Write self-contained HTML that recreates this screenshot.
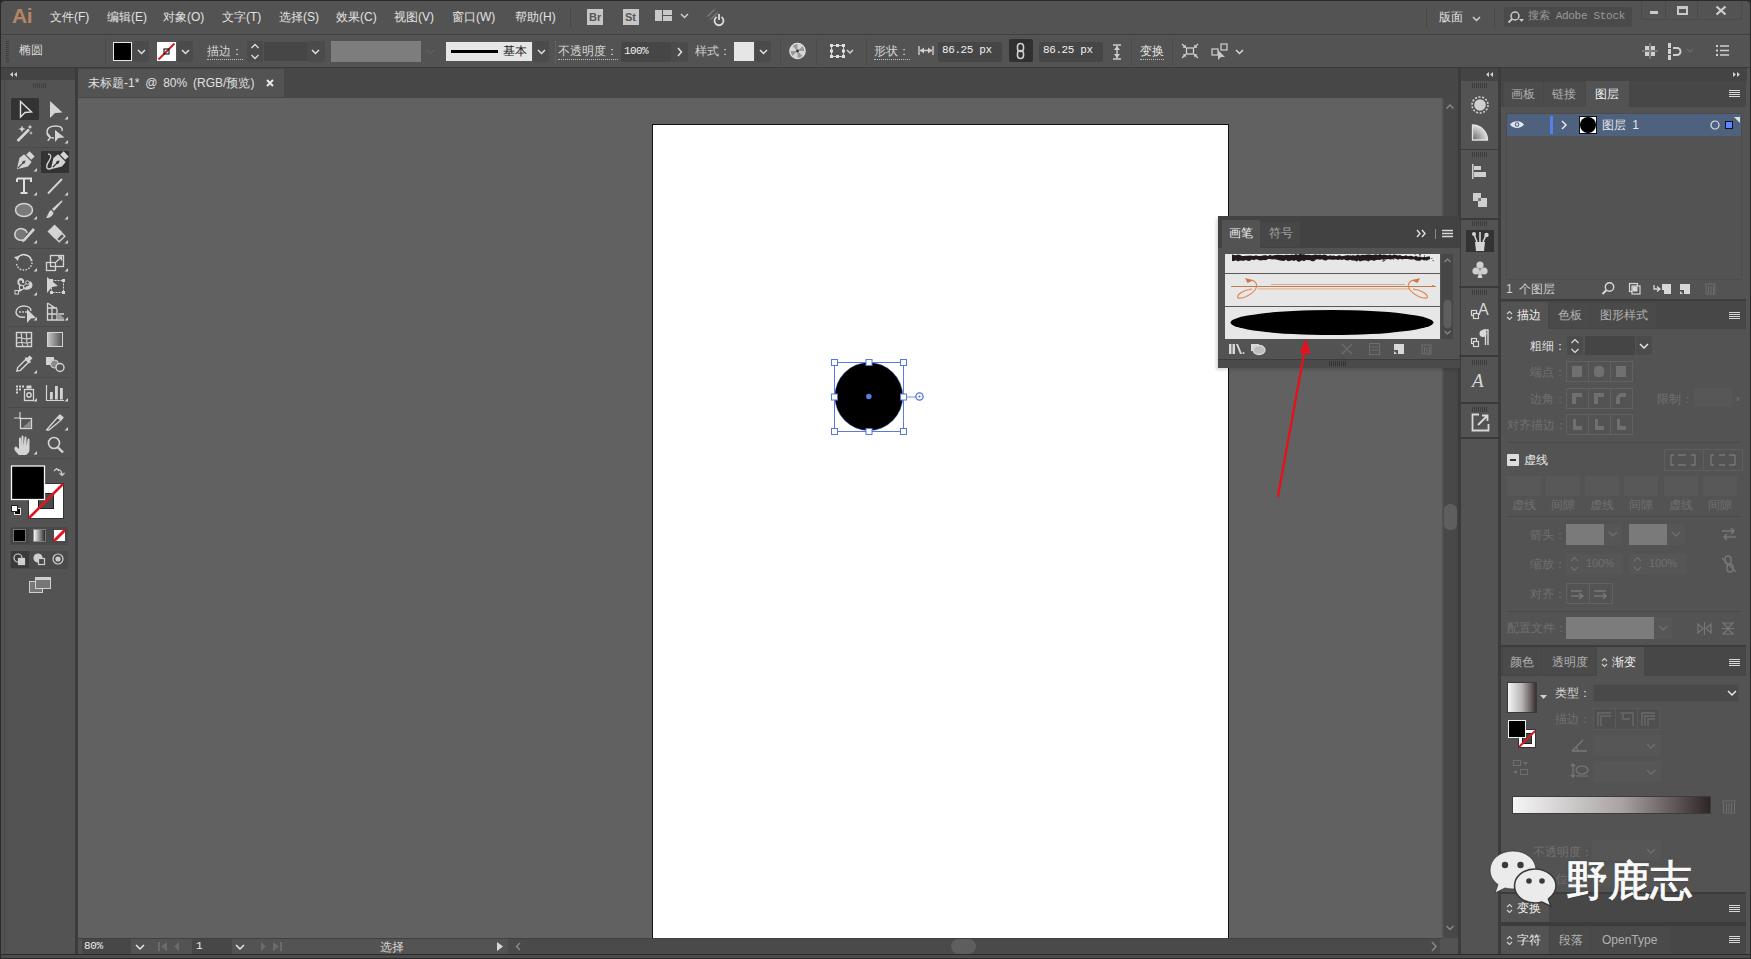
<!DOCTYPE html>
<html><head><meta charset="utf-8">
<style>
*{margin:0;padding:0;box-sizing:border-box}
html,body{width:1751px;height:959px;overflow:hidden;background:#2a2a2a}
body{position:relative;font-family:"Liberation Sans",sans-serif;font-size:12px;color:#d6d6d6}
.a{position:absolute}
.t{position:absolute;white-space:nowrap;line-height:1}
svg{position:absolute;overflow:visible}
.mi{top:11px;font-size:12px;color:#e2e2e2}
.ul{font-size:12px;color:#d6d6d6;padding-bottom:2px;border-bottom:1px dotted #bdbdbd}
.dim{font-size:12px;color:#707070}
.mono{font-family:"Liberation Mono",monospace;font-size:11px;color:#f0f0f0;letter-spacing:-0.4px}
</style></head><body>

<!-- ===== menu bar ===== -->
<div class="a" id="menubar" style="left:1px;top:1px;width:1749px;height:33px;background:#535353;border-radius:4px 4px 0 0"></div>
<div class="a" style="left:1px;top:34px;width:1749px;height:1px;background:#404040"></div>


<!-- menu content -->
<div class="t" style="left:12px;top:5px;font-size:21px;font-weight:bold;color:#b48666;letter-spacing:-0.5px">Ai</div>
<div class="t mi" style="left:50px">文件(F)</div>
<div class="t mi" style="left:107px">编辑(E)</div>
<div class="t mi" style="left:163px">对象(O)</div>
<div class="t mi" style="left:222px">文字(T)</div>
<div class="t mi" style="left:279px">选择(S)</div>
<div class="t mi" style="left:336px">效果(C)</div>
<div class="t mi" style="left:394px">视图(V)</div>
<div class="t mi" style="left:452px">窗口(W)</div>
<div class="t mi" style="left:515px">帮助(H)</div>
<div class="a" style="left:570px;top:8px;width:1px;height:20px;background:#484848"></div>
<div class="a" style="left:587px;top:9px;width:16px;height:16px;background:#c6c6c6"></div>
<div class="t" style="left:589px;top:12px;font-size:11px;font-weight:bold;color:#575757">Br</div>
<div class="a" style="left:623px;top:9px;width:16px;height:16px;background:#c6c6c6"></div>
<div class="t" style="left:625px;top:12px;font-size:11px;font-weight:bold;color:#575757">St</div>
<div class="a" style="left:655px;top:10px;width:7px;height:11px;background:#c8c8c8"></div>
<div class="a" style="left:663px;top:10px;width:9px;height:5px;background:#c8c8c8"></div>
<div class="a" style="left:663px;top:16px;width:9px;height:5px;background:#c8c8c8"></div>
<svg style="left:680px;top:13px" width="9" height="6"><path d="M1 1 L4.5 4.5 L8 1" fill="none" stroke="#d0d0d0" stroke-width="1.5"/></svg>
<svg style="left:704px;top:7px" width="24" height="20"><path d="M2 10 L9 3 L12 2 L5 9Z M5 13 L12 6 L15 5 L8 12Z M9 15 L14 10 L15 8 L11 13Z" fill="#7c7c7c"/><path d="M12.5 10 A4.5 4.5 0 1 0 17.5 10" fill="none" stroke="#dcdcdc" stroke-width="1.8"/><path d="M15 7 V13" stroke="#dcdcdc" stroke-width="1.8"/></svg>
<div class="a" style="left:1426px;top:8px;width:1px;height:20px;background:#484848"></div>
<div class="t mi" style="left:1439px">版面</div>
<svg style="left:1472px;top:16px" width="9" height="6"><path d="M1 1 L4.5 4.5 L8 1" fill="none" stroke="#d0d0d0" stroke-width="1.5"/></svg>
<div class="a" style="left:1494px;top:8px;width:1px;height:20px;background:#484848"></div>
<div class="a" style="left:1504px;top:7px;width:128px;height:20px;background:#4a4a4a;border-radius:2px"></div>
<svg style="left:1507px;top:10px" width="18" height="14"><circle cx="8" cy="6" r="4" fill="none" stroke="#c8c8c8" stroke-width="1.5"/><path d="M5 9 L1.5 12.5" stroke="#c8c8c8" stroke-width="1.8"/><path d="M12 9 H17 L14.5 12Z" fill="#c8c8c8"/></svg>
<div class="t" style="left:1528px;top:11px;font-size:11px;letter-spacing:-0.3px;color:#9a9a9a;font-family:'Liberation Mono',monospace">搜索 Adobe Stock</div>
<div class="a" style="left:1641px;top:1px;width:101px;height:19px;border:1px solid #4b4b4b;border-top:none;border-radius:0 0 3px 3px"></div>
<div class="a" style="left:1665px;top:1px;width:1px;height:18px;background:#4b4b4b"></div>
<div class="a" style="left:1697px;top:1px;width:1px;height:18px;background:#4b4b4b"></div>
<div class="a" style="left:1650px;top:11px;width:8px;height:3px;background:#c8c8c8"></div>
<div class="a" style="left:1677px;top:6px;width:11px;height:9px;border:2px solid #c8c8c8;border-top-width:3px"></div>
<svg style="left:1715px;top:5px" width="12" height="11"><path d="M1.5 1.5 L10.5 9.5 M10.5 1.5 L1.5 9.5" stroke="#d0d0d0" stroke-width="2.2"/></svg>

<!-- ===== control bar ===== -->
<div class="a" id="ctrl" style="left:1px;top:35px;width:1749px;height:32px;background:#535353"></div>
<div class="a" style="left:1px;top:67px;width:1749px;height:1px;background:#3a3a3a"></div>


<!-- control content -->
<div class="a" style="left:6px;top:41px;width:3px;height:22px;background:repeating-linear-gradient(#3e3e3e 0 1px,transparent 1px 2px)"></div>
<div class="t" style="left:19px;top:44px;font-size:12px;color:#d8d8d8">椭圆</div>
<div class="a" style="left:105px;top:39px;width:1px;height:26px;background:#4a4a4a"></div>
<div class="a" style="left:113px;top:42px;width:19px;height:19px;background:#000;border:1px solid #e8e8e8"></div>
<div class="a" style="left:133px;top:41px;width:16px;height:21px;background:#4b4b4b;border-radius:2px"></div>
<svg style="left:137px;top:49px" width="9" height="6"><path d="M1 1 L4.5 4.5 L8 1" fill="none" stroke="#e0e0e0" stroke-width="1.5"/></svg>
<div class="a" style="left:157px;top:42px;width:19px;height:19px;background:#fff"></div>
<svg style="left:157px;top:42px" width="19" height="19"><path d="M1.5 17.5 L17.5 1.5" stroke="#d71a21" stroke-width="2"/><rect x="7" y="7" width="5" height="5" fill="none" stroke="#222" stroke-width="1.2"/></svg>
<div class="a" style="left:177px;top:41px;width:16px;height:21px;background:#4b4b4b;border-radius:2px"></div>
<svg style="left:181px;top:49px" width="9" height="6"><path d="M1 1 L4.5 4.5 L8 1" fill="none" stroke="#e0e0e0" stroke-width="1.5"/></svg>
<div class="t ul" style="left:207px;top:45px">描边：</div>
<div class="a" style="left:247px;top:41px;width:16px;height:21px;background:#4b4b4b;border-radius:2px"></div>
<svg style="left:250px;top:43px" width="10" height="17"><path d="M1.5 5 L5 1.5 L8.5 5 M1.5 12 L5 15.5 L8.5 12" fill="none" stroke="#e0e0e0" stroke-width="1.3"/></svg>
<div class="a" style="left:264px;top:42px;width:43px;height:19px;background:#464646"></div>
<div class="a" style="left:307px;top:41px;width:18px;height:21px;background:#4b4b4b;border-radius:2px"></div>
<svg style="left:311px;top:49px" width="9" height="6"><path d="M1 1 L4.5 4.5 L8 1" fill="none" stroke="#e0e0e0" stroke-width="1.5"/></svg>
<div class="a" style="left:331px;top:41px;width:90px;height:21px;background:#7d7d7d"></div>
<svg style="left:426px;top:49px" width="9" height="6"><path d="M1 1 L4.5 4.5 L8 1" fill="none" stroke="#5e5e5e" stroke-width="1.5"/></svg>
<div class="a" style="left:446px;top:42px;width:86px;height:19px;background:#e6e6e6"></div>
<div class="a" style="left:451px;top:50px;width:47px;height:3px;background:#000"></div>
<div class="t" style="left:503px;top:45px;font-size:12px;color:#222">基本</div>
<div class="a" style="left:533px;top:41px;width:16px;height:21px;background:#4b4b4b;border-radius:2px"></div>
<svg style="left:537px;top:49px" width="9" height="6"><path d="M1 1 L4.5 4.5 L8 1" fill="none" stroke="#e0e0e0" stroke-width="1.5"/></svg>
<div class="a" style="left:555px;top:41px;width:1px;height:22px;border-left:1px dotted #6a6a6a"></div>
<div class="t ul" style="left:558px;top:45px">不透明度：</div>
<div class="a" style="left:621px;top:42px;width:50px;height:20px;background:#464646;border-radius:2px"></div>
<div class="t" style="left:624px;top:46px;font-size:11px;color:#f0f0f0;font-family:'Liberation Mono',monospace;letter-spacing:-0.6px">100%</div>
<div class="a" style="left:671px;top:42px;width:17px;height:20px;background:#4b4b4b;border-radius:2px"></div>
<svg style="left:677px;top:47px" width="6" height="10"><path d="M1 1 L4.5 5 L1 9" fill="none" stroke="#e0e0e0" stroke-width="1.5"/></svg>
<div class="t" style="left:695px;top:45px;font-size:12px;color:#d0d0d0">样式：</div>
<div class="a" style="left:734px;top:42px;width:20px;height:19px;background:#e6e6e6"></div>
<div class="a" style="left:755px;top:41px;width:16px;height:21px;background:#4b4b4b;border-radius:2px"></div>
<svg style="left:759px;top:49px" width="9" height="6"><path d="M1 1 L4.5 4.5 L8 1" fill="none" stroke="#e0e0e0" stroke-width="1.5"/></svg>
<div class="a" style="left:780px;top:39px;width:1px;height:26px;background:#4a4a4a"></div>
<svg style="left:789px;top:43px" width="18" height="17"><circle cx="8.5" cy="8" r="7.6" fill="#9a9a9a" stroke="#e4e4e4" stroke-width="1.4"/><g fill="#d6d6d6"><path d="M8.5 8 L8.5 0.5 A7.5 7.5 0 0 1 13.8 2.7Z"/><path d="M8.5 8 L16 8 A7.5 7.5 0 0 1 13.8 13.3Z"/><path d="M8.5 8 L8.5 15.5 A7.5 7.5 0 0 1 3.2 13.3Z"/><path d="M8.5 8 L1 8 A7.5 7.5 0 0 1 3.2 2.7Z"/></g><circle cx="8.5" cy="8" r="1.4" fill="#333"/></svg>
<div class="a" style="left:816px;top:39px;width:1px;height:26px;background:#4a4a4a"></div>
<svg style="left:829px;top:43px" width="28" height="17"><rect x="2.5" y="2.5" width="12" height="11" fill="none" stroke="#d0d0d0" stroke-width="1"/><g fill="#e0e0e0"><rect x="1" y="1" width="3" height="3"/><rect x="7" y="1" width="3" height="3"/><rect x="13" y="1" width="3" height="3"/><rect x="1" y="6.5" width="3" height="3"/><rect x="13" y="6.5" width="3" height="3"/><rect x="1" y="12" width="3" height="3"/><rect x="7" y="12" width="3" height="3"/><rect x="13" y="12" width="3" height="3"/></g><path d="M18 7 L21 10 L24 7" fill="none" stroke="#d8d8d8" stroke-width="1.4"/></svg>
<div class="a" style="left:866px;top:39px;width:1px;height:26px;background:#4a4a4a"></div>
<div class="t ul" style="left:874px;top:45px">形状：</div>
<svg style="left:918px;top:46px" width="16" height="10"><path d="M1 0 V9 M15 0 V9 M2 4.5 H14" stroke="#cfcfcf" stroke-width="1.4"/><path d="M2 4.5 L6 1.5 V7.5Z M14 4.5 L10 1.5 V7.5Z" fill="#cfcfcf"/></svg>
<div class="a" style="left:938px;top:42px;width:64px;height:20px;background:#464646;border-radius:2px"></div>
<div class="t mono" style="left:942px;top:45px">86.25 px</div>
<div class="a" style="left:1009px;top:39px;width:24px;height:23px;background:#303030;border-radius:2px"></div>
<svg style="left:1015px;top:42px" width="12" height="18"><rect x="2.5" y="1.5" width="6" height="8" rx="3" fill="none" stroke="#cfcfcf" stroke-width="1.6"/><rect x="2.5" y="8.5" width="6" height="8" rx="3" fill="none" stroke="#cfcfcf" stroke-width="1.6"/></svg>
<div class="a" style="left:1039px;top:42px;width:64px;height:20px;background:#464646;border-radius:2px"></div>
<div class="t mono" style="left:1043px;top:45px">86.25 px</div>
<svg style="left:1112px;top:44px" width="10" height="16"><path d="M1 1 H9 M1 15 H9 M5 2 V14" stroke="#cfcfcf" stroke-width="1.4"/><path d="M5 2 L2 6 H8Z M5 14 L2 10 H8Z" fill="#cfcfcf"/></svg>
<div class="a" style="left:1131px;top:39px;width:1px;height:26px;background:#4a4a4a"></div>
<div class="t ul" style="left:1140px;top:45px;color:#e6e6e6">变换</div>
<div class="a" style="left:1172px;top:39px;width:1px;height:26px;background:#4a4a4a"></div>
<svg style="left:1181px;top:43px" width="18" height="16"><rect x="5.5" y="5" width="7" height="6" fill="none" stroke="#d0d0d0" stroke-width="1.3"/><g stroke="#d0d0d0" stroke-width="1.2"><path d="M1 1 L4.5 4.5 M17 1 L13.5 4.5 M1 15 L4.5 11.5 M17 15 L13.5 11.5"/></g><g fill="#d0d0d0"><path d="M5 5 L1.5 4.5 L4.5 1.5Z M13 5 L16.5 4.5 L13.5 1.5Z M5 11 L1.5 11.5 L4.5 14.5Z M13 11 L16.5 11.5 L13.5 14.5Z"/></g></svg>
<svg style="left:1211px;top:43px" width="36" height="18"><rect x="1" y="6" width="6" height="6" fill="none" stroke="#c8c8c8" stroke-width="1.3"/><rect x="10" y="1" width="6" height="6" fill="none" stroke="#c8c8c8" stroke-width="1.3"/><path d="M7 7 L7 17 L10 14 L14 14Z" fill="#c8c8c8"/><path d="M25 7 L28.5 10.5 L32 7" fill="none" stroke="#d8d8d8" stroke-width="1.5"/></svg>
<svg style="left:1642px;top:43px" width="16" height="16"><g fill="#cfcfcf"><rect x="3" y="3" width="4" height="4"/><rect x="9" y="3" width="4" height="4"/><rect x="3" y="9" width="4" height="4"/><rect x="9" y="9" width="4" height="4"/></g><path d="M8 0 V16 M0 8 H16" stroke="#9a9a9a" stroke-width="1"/></svg>
<svg style="left:1667px;top:43px" width="30" height="17"><g fill="#d0d0d0"><rect x="1" y="0" width="3" height="5"/><rect x="1" y="6" width="3" height="5"/><rect x="1" y="12" width="3" height="5"/></g><path d="M6 5 H10 A3.5 3.5 0 0 1 10 12 H6" fill="none" stroke="#d0d0d0" stroke-width="2"/><path d="M20 6 L23 9 L26 6" fill="none" stroke="#6a6a6a" stroke-width="1.3"/></svg>
<svg style="left:1716px;top:45px" width="14" height="12"><g fill="#d0d0d0"><rect x="0" y="0" width="2" height="2"/><rect x="0" y="4.5" width="2" height="2"/><rect x="0" y="9" width="2" height="2"/></g><path d="M4 1 H13 M4 5.5 H13 M4 10 H13" stroke="#d0d0d0" stroke-width="1.5"/></svg>

<!-- ===== left toolbar ===== -->
<div class="a" id="tools" style="left:1px;top:68px;width:74px;height:886px;background:#535353"></div>
<div class="a" style="left:1px;top:68px;width:74px;height:12px;background:#444"></div>
<div class="a" style="left:75px;top:68px;width:3px;height:891px;background:#3c3c3c"></div>
<div class="a" style="left:4px;top:80px;width:1px;height:874px;background:#474747"></div>


<!-- tools content -->
<svg style="left:0;top:0" width="78" height="600">
<g fill="#3f3f3f"><rect x="33" y="83" width="1" height="5"/><rect x="35" y="83" width="1" height="5"/><rect x="37" y="83" width="1" height="5"/><rect x="39" y="83" width="1" height="5"/><rect x="41" y="83" width="1" height="5"/><rect x="43" y="83" width="1" height="5"/><rect x="45" y="83" width="1" height="5"/></g>
<path d="M10 72 L13 74.5 L10 77Z M14 72 L17 74.5 L14 77Z" fill="#cfcfcf" transform="translate(27 0) scale(-1 1)"/>
<g fill="#4a4a4a"><rect x="8" y="147" width="62" height="1"/><rect x="8" y="248" width="62" height="1"/><rect x="8" y="326" width="62" height="1"/><rect x="8" y="377" width="62" height="1"/><rect x="8" y="407" width="62" height="1"/><rect x="8" y="458" width="62" height="1"/></g>
<rect x="11" y="98" width="28" height="22" fill="#333" rx="1"/>
<rect x="41" y="151" width="28" height="22" fill="#333" rx="1"/>
<g fill="#d4d4d4">
<path d="M68 116 V119.5 H64.5Z M68 140 V143.5 H64.5Z"/>
<path d="M37 168 V171.5 H33.5Z M37 192 V195.5 H33.5Z M68 192 V195.5 H64.5Z M37 216 V219.5 H33.5Z M68 216 V219.5 H64.5Z M37 240 V243.5 H33.5Z M68 240 V243.5 H64.5Z"/>
<path d="M37 268 V271.5 H33.5Z M68 268 V271.5 H64.5Z M37 292 V295.5 H33.5Z M37 317 V320.5 H33.5Z M68 317 V320.5 H64.5Z"/>
<path d="M37 370 V373.5 H33.5Z M37 398 V401.5 H33.5Z M68 398 V401.5 H64.5Z M68 427 V430.5 H64.5Z M37 451 V454.5 H33.5Z"/>
</g>
<!-- selection -->
<path d="M20.5 101.5 L31.5 112 L25 112.5 L20.5 117Z" fill="none" stroke="#e0e0e0" stroke-width="1.4" stroke-linejoin="miter"/>
<path d="M50 101 L62.5 112.5 L55 113 L50 118Z" fill="#d4d4d4"/>
<!-- magic wand -->
<path d="M17.5 141 L29 129.5" stroke="#d4d4d4" stroke-width="2.6"/>
<path d="M22 125.5 L23 128 L25.5 129 L23 130 L22 132.5 L21 130 L18.5 129 L21 128Z M30 124.5 L30.7 126.3 L32.5 127 L30.7 127.7 L30 129.5 L29.3 127.7 L27.5 127 L29.3 126.3Z M31 131 L31.6 132.4 L33 133 L31.6 133.6 L31 135 L30.4 133.6 L29 133 L30.4 132.4Z" fill="#d4d4d4"/>
<!-- lasso -->
<path d="M54 138 C49 138 47 135 47 132 C47 128 51 126 56 126 C61 126 63 128 62 131 M47 132 C47 135 50 135 50 137 C50 139 48 140 48 141" fill="none" stroke="#d4d4d4" stroke-width="1.5"/>
<path d="M55 130 L64.5 137.5 L58.5 138 L55 142Z" fill="#d4d4d4"/>
<!-- pen -->
<g transform="translate(24.5 161.5) rotate(45) scale(1.2)"><path d="M-3 -9 H3 V-5 H-3Z" fill="#d4d4d4"/><path d="M-4.5 -4 H4.5 L5 1 L0 9 L-5 1Z" fill="#d4d4d4"/><path d="M0 -1 V8" stroke="#535353" stroke-width="1"/><circle cx="0" cy="1" r="1.2" fill="#535353"/></g>
<!-- curvature pen -->
<g transform="translate(58.5 161.5) rotate(45) scale(1.2)"><path d="M-3 -9 H3 V-5 H-3Z" fill="#d4d4d4"/><path d="M-4.5 -4 H4.5 L5 1 L0 9 L-5 1Z" fill="#d4d4d4"/><path d="M0 -1 V8" stroke="#333" stroke-width="1"/><circle cx="0" cy="1" r="1.2" fill="#333"/></g>
<path d="M48 154 C51 154 52 157 49 161 C46 165 46 169 49 169 C51 169 52 168 53 167" fill="none" stroke="#d4d4d4" stroke-width="1.3"/>
<!-- type -->
<path d="M17 178.5 H31 V182 M17 178.5 V182 M24 178.5 V193 M20.5 193 H27.5" fill="none" stroke="#e0e0e0" stroke-width="2"/>
<!-- line -->
<path d="M48 193.5 L62 179" stroke="#d4d4d4" stroke-width="1.8"/>
<!-- ellipse -->
<ellipse cx="24" cy="210" rx="8.5" ry="6.5" fill="#7a7a7a" stroke="#d4d4d4" stroke-width="1.5"/>
<!-- paintbrush -->
<path d="M61 201 C62 200 63 201 62 202 L54 211 L52 209Z" fill="#d4d4d4"/>
<path d="M51 210 L53.5 212.5 C53 216 50 218 46 218 C48 216 48 212 51 210Z" fill="#d4d4d4"/>
<!-- shaper -->
<path d="M23 240 C17 241 14 237 15 233 C16 229 20 228 23 229 C26 230 27 232 27 233" fill="#777" stroke="#d4d4d4" stroke-width="1.5"/>
<path d="M33 228 L35 230 L25 241 L22 242.5 L23 239.5Z" fill="#d4d4d4"/>
<!-- eraser -->
<g transform="translate(56 233) rotate(-45)"><rect x="-5" y="-7" width="10" height="11" fill="#d4d4d4"/><rect x="-4" y="4.5" width="8" height="4" fill="none" stroke="#d4d4d4" stroke-width="1.4"/></g>
<!-- rotate -->
<path d="M17 259 C19 255 23 254 26 255 C31 256 33 261 31.5 265 C30 269 25 271 21 269.5 C18.5 268.5 17 266.5 16.5 264" fill="none" stroke="#d4d4d4" stroke-width="1.4" stroke-dasharray="1.6 1.4"/>
<path d="M17 259 C19 255 23 254 26 255 C29 256 31 258 31.5 261" fill="none" stroke="#d4d4d4" stroke-width="1.6"/>
<path d="M14 257 L19 256 L18 261Z" fill="#d4d4d4"/>
<!-- scale -->
<rect x="50.5" y="255.5" width="13" height="11" fill="none" stroke="#d4d4d4" stroke-width="1.3"/>
<rect x="46.5" y="262.5" width="9" height="8" fill="none" stroke="#d4d4d4" stroke-width="1.3"/>
<path d="M56 262 L61.5 257 M58 257 H61.5 V260.5" fill="none" stroke="#d4d4d4" stroke-width="1.4"/>
<!-- puppet warp -->
<path d="M19 280 C17 282 19 285 21 286 C23 287 22 290 19 291 M19 280 C21 278 24 280 23 283 M21 286 C24 289 28 290 31 287 C32 285 31 283 30 282 C31 285 29 288 26 287" fill="none" stroke="#d4d4d4" stroke-width="2"/>
<path d="M17 292 L22 287 L27 283" fill="none" stroke="#d4d4d4" stroke-width="1"/>
<rect x="15" y="290.5" width="3.5" height="3.5" fill="#535353" stroke="#d4d4d4" stroke-width="1"/>
<circle cx="21.5" cy="287.5" r="2.2" fill="#535353" stroke="#d4d4d4" stroke-width="1.1"/>
<circle cx="27.5" cy="282.5" r="1.8" fill="#535353" stroke="#d4d4d4" stroke-width="1"/>
<!-- free transform -->
<rect x="51.5" y="280.5" width="12" height="12" fill="none" stroke="#d4d4d4" stroke-width="1" stroke-dasharray="2 1"/>
<g fill="#d4d4d4"><rect x="50" y="279" width="3" height="3"/><rect x="62" y="279" width="3" height="3"/><rect x="50" y="291" width="3" height="3"/><rect x="62" y="291" width="3" height="3"/></g>
<path d="M47 277 L58 286 L52 287 L47 293Z" fill="#d4d4d4"/>
<!-- shape builder -->
<path d="M25 317 C20 318 16 316 16 312 C16 308 20 306 24 306 C28 306 31 308 31 311" fill="none" stroke="#d4d4d4" stroke-width="1.4"/>
<g fill="#d4d4d4"><circle cx="20" cy="312" r="0.9"/><circle cx="23" cy="312" r="0.9"/><circle cx="26" cy="312" r="0.9"/></g>
<path d="M27 309 L36 318 L31 318.5 L27 323Z" fill="#d4d4d4"/>
<!-- perspective grid -->
<path d="M47.5 303 V320 H64 M47.5 303 L57 309 V320 M47.5 308 H57 M47.5 314 H64 M52 305.5 V320" fill="none" stroke="#d4d4d4" stroke-width="1.3"/>
<path d="M57 312 L64 318 V319 H57Z" fill="#9a9a9a"/>
<!-- mesh -->
<rect x="16.5" y="332.5" width="15" height="14" fill="none" stroke="#d4d4d4" stroke-width="1.4"/>
<path d="M17 338 C21 336 25 341 31 338 M17 343 C22 341 26 345 31 342 M21 333 C23 337 20 341 23 346 M26 333 C28 337 25 341 28 346" fill="none" stroke="#d4d4d4" stroke-width="1.1"/>
<!-- gradient -->
<defs><linearGradient id="tg" x1="0" x2="1"><stop offset="0" stop-color="#c8c8c8"/><stop offset="1" stop-color="#505050"/></linearGradient></defs>
<rect x="47.5" y="332.5" width="15" height="14" fill="url(#tg)" stroke="#d4d4d4" stroke-width="1"/>
<!-- eyedropper -->
<g transform="translate(24 364) rotate(45)"><rect x="-2" y="-10" width="4" height="4" fill="#d4d4d4"/><rect x="-3.5" y="-6.5" width="7" height="2" fill="#d4d4d4"/><path d="M-2 -4.5 H2 V7 L0 10 L-2 7Z" fill="none" stroke="#d4d4d4" stroke-width="1.4"/></g>
<!-- blend -->
<rect x="46" y="357" width="8" height="8" fill="#d4d4d4"/>
<circle cx="54.5" cy="364" r="4" fill="#8a8a8a" stroke="#d4d4d4" stroke-width="1"/>
<circle cx="60" cy="367.5" r="4" fill="#535353" stroke="#d4d4d4" stroke-width="1.4"/>
<!-- symbol sprayer -->
<g fill="#d4d4d4"><rect x="16" y="385.5" width="2" height="2"/><rect x="19" y="385.5" width="2" height="2"/><rect x="22" y="385.5" width="2" height="2"/><rect x="16" y="388.5" width="2" height="2"/><rect x="19" y="388.5" width="2" height="2"/><rect x="16" y="391.5" width="2" height="2"/></g>
<rect x="24.5" y="389.5" width="9" height="11" fill="none" stroke="#d4d4d4" stroke-width="1.3"/>
<rect x="26.5" y="385.5" width="5" height="3" fill="#d4d4d4"/>
<circle cx="29" cy="395" r="2.2" fill="none" stroke="#d4d4d4" stroke-width="1.4"/>
<!-- column graph -->
<path d="M46.5 385 V400.5 H64" fill="none" stroke="#d4d4d4" stroke-width="1.2"/>
<g fill="#d4d4d4"><rect x="50" y="392" width="2.8" height="7.5"/><rect x="55" y="386" width="2.8" height="13.5"/><rect x="60" y="388" width="2.8" height="11.5"/></g>
<!-- artboard -->
<path d="M14 418 H21 M20 412 V419" stroke="#d4d4d4" stroke-width="1.2"/>
<rect x="20.5" y="418.5" width="11" height="10" fill="none" stroke="#d4d4d4" stroke-width="1.3"/>
<path d="M22 428 L31 420 V428Z" fill="#8a8a8a"/>
<!-- slice -->
<path d="M46.5 430 L57 418 L60 415 L63 417.5 L60.5 420.5 L49 430Z" fill="none" stroke="#d4d4d4" stroke-width="1.3" stroke-linejoin="round"/>
<path d="M57 418 L60 415 L63 417.5 L60.5 420.5Z" fill="#d4d4d4"/>
<!-- hand -->
<path d="M19 455 C16 452 13 449 15 447 C16 446 17 447 19 449 L19 439 C19 437 21 437 21 439 V446 L21.5 437 C21.5 435 23.5 435 23.5 437 V446 L24.5 438 C24.5 436 26.5 436 26.5 438 V446 L27.5 440 C27.5 438 29.5 438 29.5 440 V449 C29.5 453 27 455 24 455Z" fill="#d4d4d4"/>
<!-- zoom -->
<circle cx="54" cy="443" r="5.5" fill="none" stroke="#d4d4d4" stroke-width="1.6"/>
<path d="M58 447.5 L63 452.5" stroke="#d4d4d4" stroke-width="2.4"/>
<!-- fill/stroke -->
<rect x="28.5" y="483.5" width="35" height="35" fill="#fff" stroke="#333" stroke-width="1"/>
<rect x="38.5" y="493.5" width="15" height="15" fill="#4a4a4a" stroke="#222" stroke-width="1"/>
<path d="M29 518 L63 484" stroke="#d71a21" stroke-width="2.6"/>
<rect x="11.5" y="466" width="33" height="33.5" fill="#000" stroke="#f6f6f6" stroke-width="1.3"/>
<path d="M56 469 C60 469 62 471 62 475 M54 471 L56.5 468.5 L59 471 M59.5 473 L62 475.5 L64.5 473" fill="none" stroke="#cfcfcf" stroke-width="1.2"/>
<rect x="14.5" y="508.5" width="6" height="6" fill="#000" stroke="#e6e6e6" stroke-width="1"/>
<rect x="11.5" y="505.5" width="6" height="6" fill="#fff" stroke="#222" stroke-width="1"/>
<!-- color modes -->
<rect x="10" y="527" width="58" height="18" fill="#4a4a4a" rx="1"/>
<rect x="11" y="528" width="18" height="16" fill="#444"/>
<rect x="13.5" y="529.5" width="12" height="12" fill="#000" stroke="#888" stroke-width="0.8"/>
<defs><linearGradient id="tg2" x1="0" x2="1"><stop offset="0" stop-color="#fff"/><stop offset="1" stop-color="#222"/></linearGradient></defs>
<rect x="33.5" y="529.5" width="12" height="12" fill="url(#tg2)" stroke="#888" stroke-width="0.8"/>
<rect x="53.5" y="529.5" width="12" height="12" fill="#fff" stroke="#333" stroke-width="0.8"/>
<path d="M54 541 L65 530" stroke="#e0141c" stroke-width="3"/>
<!-- draw modes -->
<rect x="10" y="551" width="58" height="18" fill="#4a4a4a" rx="1"/>
<rect x="11" y="551" width="18" height="17" fill="#3a3a3a"/>
<g fill="none" stroke="#cfcfcf" stroke-width="1.2"><circle cx="18" cy="558" r="4"/><rect x="18.5" y="558.5" width="6" height="6" fill="#cfcfcf"/><circle cx="38" cy="558" r="4" fill="#cfcfcf"/><rect x="38.5" y="558.5" width="6" height="6" fill="#4a4a4a"/><circle cx="58" cy="559" r="5"/><circle cx="58" cy="559" r="2" fill="#cfcfcf"/></g>
<!-- screen mode -->
<rect x="29.5" y="581.5" width="13" height="11" fill="#777" stroke="#cfcfcf" stroke-width="1"/>
<rect x="35.5" y="577.5" width="15" height="11" fill="#777" stroke="#cfcfcf" stroke-width="1"/>
<rect x="36" y="578" width="14" height="2" fill="#cfcfcf"/>
</svg>

<!-- ===== tab bar ===== -->
<div class="a" style="left:78px;top:68px;width:1380px;height:30px;background:#474747"></div>
<div class="a" style="left:78px;top:69px;width:206px;height:28px;background:#535353"></div>


<!-- tab text -->
<div class="t" style="left:88px;top:77px;font-size:12px;color:#e0e0e0;word-spacing:2.5px">未标题-1* @ 80% (RGB/预览)</div>
<svg style="left:266px;top:79px" width="8" height="8"><path d="M1 1 L7 7 M7 1 L1 7" stroke="#e8e8e8" stroke-width="2"/></svg>

<!-- ===== canvas ===== -->
<div class="a" id="canvas" style="left:78px;top:98px;width:1364px;height:840px;background:#616161"></div>
<!-- artboard -->
<div class="a" style="left:652px;top:124px;width:577px;height:814px;background:#fff;border:1px solid #111;border-bottom:none"></div>

<!-- circle object -->
<svg style="left:820px;top:350px" width="110" height="95">
<circle cx="48.8" cy="46.5" r="34" fill="#000"/>
<circle cx="48.8" cy="46.5" r="34" fill="none" stroke="#4a6fe0" stroke-width="0.8" opacity="0.6"/>
<rect x="14.5" y="12.5" width="69" height="69" fill="none" stroke="#5b7be0" stroke-width="1"/>
<path d="M86 47 H96" stroke="#8aa2e8" stroke-width="1.2"/>
<circle cx="99.5" cy="46.5" r="3.6" fill="#fff" stroke="#4f70e0" stroke-width="1.3"/>
<circle cx="99.5" cy="46.5" r="1.1" fill="#4f70e0"/>
<g fill="#fff" stroke="#5676e0" stroke-width="1">
<rect x="11.5" y="9.5" width="6" height="6"/><rect x="46" y="9.5" width="6" height="6"/><rect x="80.5" y="9.5" width="6" height="6"/>
<rect x="11.5" y="44" width="6" height="6"/><rect x="80.5" y="44" width="6" height="6"/>
<rect x="11.5" y="78.5" width="6" height="6"/><rect x="46" y="78.5" width="6" height="6"/><rect x="80.5" y="78.5" width="6" height="6"/>
</g>
<circle cx="48.8" cy="46.5" r="2.8" fill="#5b7be0"/>
</svg>
<!-- vertical scrollbar -->
<div class="a" style="left:1442px;top:98px;width:16px;height:840px;background:#535353"></div>
<div class="a" style="left:1443px;top:98px;width:15px;height:840px;background:#484848;border-left:1px solid #4e4e4e;border-right:1px solid #444"></div>
<div class="a" style="left:1444px;top:504px;width:13px;height:26px;background:#5e5e5e;border-radius:6px"></div>
<svg style="left:1445px;top:102px" width="10" height="830"><path d="M1.5 6.5 L5 3 L8.5 6.5" fill="none" stroke="#8a8a8a" stroke-width="1.4"/><path d="M1.5 824 L5 827.5 L8.5 824" fill="none" stroke="#8a8a8a" stroke-width="1.4"/></svg>

<div class="a" style="left:1458px;top:68px;width:3px;height:891px;background:#3c3c3c"></div>


<!-- ===== brush panel ===== -->
<div class="a" style="left:1218px;top:216px;width:242px;height:152px;background:#424242;box-shadow:-2px 2px 3px rgba(0,0,0,0.15)"></div>
<div class="a" style="left:1222px;top:220px;width:38px;height:28px;background:#535353"></div>
<div class="a" style="left:1260px;top:222px;width:40px;height:25px;background:#474747"></div>
<div class="t" style="left:1229px;top:227px;font-size:12px;color:#f0f0f0">画笔</div>
<div class="t" style="left:1269px;top:227px;font-size:12px;color:#a8a8a8">符号</div>
<svg style="left:1416px;top:229px" width="40" height="10"><path d="M1 1 L4 4.5 L1 8 M6 1 L9 4.5 L6 8" fill="none" stroke="#e0e0e0" stroke-width="1.4"/><path d="M19.5 0 V10" stroke="#8a8a8a" stroke-width="1"/><path d="M26 1.5 H37 M26 4.5 H37 M26 7.5 H37" stroke="#d8d8d8" stroke-width="1.4"/></svg>
<div class="a" style="left:1218px;top:248px;width:242px;height:112px;background:#535353"></div>
<div class="a" style="left:1225px;top:254px;width:215px;height:85px;background:#e7e7e7"></div>
<div class="a" style="left:1225px;top:273px;width:215px;height:1px;background:#595959"></div>
<div class="a" style="left:1225px;top:306px;width:215px;height:1px;background:#595959"></div>
<svg style="left:1225px;top:254px" width="215" height="85">
<path d="M7.0 0.6 L9.0 0.9 L11.0 1.3 L13.0 0.6 L15.0 1.0 L17.0 2.1 L19.0 1.9 L21.0 1.7 L23.0 1.7 L25.0 1.6 L27.0 1.8 L29.0 2.0 L31.0 1.3 L33.0 2.1 L35.0 1.9 L37.0 1.8 L39.0 1.3 L41.0 1.3 L43.0 1.9 L45.0 0.7 L47.0 1.8 L49.0 1.3 L51.0 1.0 L53.0 0.7 L55.0 0.9 L57.0 1.0 L59.0 1.2 L61.0 0.8 L63.0 1.1 L65.0 1.1 L67.0 0.8 L69.0 0.9 L71.0 0.1 L73.0 0.9 L75.0 -0.2 L77.0 0.3 L79.0 0.2 L81.0 1.0 L83.0 0.7 L85.0 0.9 L87.0 1.2 L89.0 0.8 L91.0 0.6 L93.0 1.1 L95.0 0.6 L97.0 1.2 L99.0 0.5 L101.0 1.0 L103.0 1.9 L105.0 1.3 L107.0 1.7 L109.0 1.6 L111.0 2.2 L113.0 1.5 L115.0 1.2 L117.0 2.3 L119.0 1.7 L121.0 1.5 L123.0 0.9 L125.0 1.7 L127.0 1.6 L129.0 1.6 L131.0 1.6 L133.0 0.6 L135.0 1.4 L137.0 0.7 L139.0 1.1 L141.0 0.7 L143.0 0.6 L145.0 0.5 L147.0 1.1 L149.0 0.7 L151.0 0.3 L153.0 1.0 L155.0 0.1 L157.0 0.9 L159.0 0.4 L161.0 1.1 L163.0 1.2 L165.0 0.6 L167.0 1.4 L169.0 0.6 L171.0 1.1 L173.0 1.6 L175.0 0.9 L177.0 1.9 L179.0 2.0 L181.0 1.2 L183.0 2.2 L185.0 1.7 L187.0 2.0 L189.0 2.8 L191.0 1.7 L193.0 3.0 L195.0 2.5 L197.0 3.3 L199.0 3.1 L201.0 3.1 L203.0 2.6 L205.0 2.6 L205.0 5.2 L203.0 5.8 L201.0 6.1 L199.0 6.6 L197.0 5.6 L195.0 6.7 L193.0 6.7 L191.0 6.6 L189.0 5.2 L187.0 5.5 L185.0 5.4 L183.0 5.1 L181.0 5.0 L179.0 5.0 L177.0 5.5 L175.0 4.8 L173.0 5.7 L171.0 4.7 L169.0 4.6 L167.0 5.2 L165.0 5.6 L163.0 4.9 L161.0 5.5 L159.0 5.5 L157.0 5.2 L155.0 5.9 L153.0 5.8 L151.0 6.0 L149.0 6.9 L147.0 5.9 L145.0 6.6 L143.0 7.0 L141.0 6.6 L139.0 6.6 L137.0 6.8 L135.0 7.6 L133.0 6.1 L131.0 7.1 L129.0 6.4 L127.0 6.4 L125.0 5.7 L123.0 6.4 L121.0 6.2 L119.0 5.2 L117.0 5.9 L115.0 5.4 L113.0 6.0 L111.0 5.6 L109.0 5.7 L107.0 5.7 L105.0 5.5 L103.0 5.4 L101.0 6.4 L99.0 6.3 L97.0 5.3 L95.0 5.8 L93.0 5.3 L91.0 5.5 L89.0 7.2 L87.0 7.3 L85.0 6.3 L83.0 6.0 L81.0 6.1 L79.0 7.3 L77.0 6.3 L75.0 7.4 L73.0 7.7 L71.0 6.1 L69.0 6.9 L67.0 6.2 L65.0 6.7 L63.0 7.2 L61.0 5.7 L59.0 6.9 L57.0 6.7 L55.0 6.5 L53.0 5.9 L51.0 5.5 L49.0 5.3 L47.0 5.4 L45.0 5.0 L43.0 4.9 L41.0 6.2 L39.0 6.1 L37.0 6.3 L35.0 6.4 L33.0 5.8 L31.0 5.3 L29.0 6.3 L27.0 5.6 L25.0 6.8 L23.0 7.1 L21.0 6.1 L19.0 6.7 L17.0 6.8 L15.0 6.5 L13.0 7.4 L11.0 6.2 L9.0 7.0 L7.0 6.9Z" fill="#221a1a"/><rect x="173.0" y="2.0" width="1.8" height="0.6" fill="#2a2222"/><rect x="201.3" y="4.9" width="1.9" height="1.4" fill="#2a2222"/><rect x="201.0" y="4.0" width="0.8" height="1.3" fill="#2a2222"/><rect x="135.5" y="2.1" width="1.6" height="1.1" fill="#2a2222"/><rect x="157.2" y="6.6" width="1.5" height="0.9" fill="#2a2222"/><rect x="142.7" y="6.0" width="1.4" height="1.3" fill="#2a2222"/><rect x="151.7" y="1.4" width="1.4" height="1.3" fill="#2a2222"/><rect x="135.4" y="5.5" width="1.9" height="1.3" fill="#2a2222"/><rect x="194.1" y="0.1" width="1.6" height="1.4" fill="#2a2222"/><rect x="124.5" y="1.9" width="1.1" height="1.1" fill="#2a2222"/><rect x="158.1" y="3.3" width="1.7" height="0.6" fill="#2a2222"/><rect x="124.9" y="0.9" width="0.9" height="0.7" fill="#2a2222"/><rect x="207.7" y="6.0" width="0.9" height="1.1" fill="#2a2222"/><rect x="148.4" y="2.2" width="1.2" height="1.2" fill="#2a2222"/><rect x="172.8" y="2.5" width="1.0" height="0.9" fill="#2a2222"/><rect x="131.1" y="3.9" width="1.7" height="0.9" fill="#2a2222"/><rect x="127.2" y="1.2" width="1.2" height="1.1" fill="#2a2222"/><rect x="190.4" y="2.7" width="1.8" height="1.2" fill="#2a2222"/><rect x="158.8" y="2.6" width="1.4" height="1.2" fill="#2a2222"/><rect x="157.8" y="4.9" width="1.4" height="0.8" fill="#2a2222"/><rect x="168.2" y="4.9" width="0.9" height="1.0" fill="#2a2222"/><rect x="158.3" y="6.2" width="1.9" height="0.9" fill="#2a2222"/><rect x="200.8" y="5.5" width="1.1" height="1.0" fill="#2a2222"/><rect x="131.1" y="5.7" width="1.6" height="1.4" fill="#2a2222"/><rect x="191.3" y="4.7" width="1.7" height="1.1" fill="#2a2222"/><rect x="129.3" y="4.1" width="0.8" height="0.7" fill="#2a2222"/><rect x="189.7" y="0.3" width="0.9" height="0.7" fill="#2a2222"/><rect x="199.2" y="1.3" width="0.8" height="1.4" fill="#2a2222"/><rect x="130.9" y="5.9" width="1.6" height="1.4" fill="#2a2222"/><rect x="205.7" y="4.1" width="1.8" height="0.6" fill="#2a2222"/>
<path d="M46 30.5 H180" fill="none" stroke="#d9a27a" stroke-width="0.9"/>
<path d="M6 32.5 H211" fill="none" stroke="#b8703f" stroke-width="0.9"/>
<path d="M33 34.8 H185" fill="none" stroke="#eeb58d" stroke-width="1.3"/>
<path d="M22 26 C30 25 34 30 30 36 C26 41 18 45 13 44 C11 41 18 36 27 35" fill="none" stroke="#e08a50" stroke-width="1.2"/>
<path d="M20 24 L28 26.5 L22.5 29Z M206 32.5 L211 32.5 L207.5 31Z" fill="#c97a44"/>
<path d="M193 26 C185 25 181 30 185 36 C189 41 197 45 202 44 C204 41 197 36 188 35" fill="none" stroke="#e08a50" stroke-width="1.2"/>
<path d="M195 24 L187 26.5 L192.5 29Z" fill="#c97a44"/>
<ellipse cx="107" cy="68.5" rx="101.5" ry="12.5" fill="#000"/>
</svg>
<div class="a" style="left:1441px;top:254px;width:12px;height:85px;background:#474747"></div>
<svg style="left:1443px;top:256px" width="9" height="82"><path d="M1.5 6 L4.5 3 L7.5 6 M1.5 75 L4.5 78 L7.5 75" fill="none" stroke="#8a8a8a" stroke-width="1.2"/><rect x="0.5" y="44" width="8" height="28" rx="4" fill="#5e5e5e"/></svg>
<svg style="left:1228px;top:341px" width="230" height="16">
<g fill="#d8d8d8"><rect x="1" y="3" width="2.5" height="10"/><rect x="4.5" y="3" width="2.5" height="10"/><path d="M8 3 L10 3 L14 13 L12 13Z"/><circle cx="15.5" cy="12" r="1"/></g>
<rect x="23" y="3" width="8" height="7" fill="#d8d8d8"/><ellipse cx="31" cy="9" rx="6" ry="4.5" fill="#bdbdbd" stroke="#d8d8d8" stroke-width="1.3"/>
<path d="M114 3 L124 13 M124 3 L114 13" stroke="#6a6a6a" stroke-width="1.6"/>
<rect x="141.5" y="2.5" width="10" height="11" fill="none" stroke="#6e6e6e" stroke-width="1"/><path d="M143 6 H150 M143 9 H150" stroke="#6e6e6e"/>
<path d="M166 3 H176 V13 H170 V9 H166Z" fill="#d8d8d8"/><path d="M166 10 L169 13 H166Z" fill="#d8d8d8"/>
<path d="M193 4 H204 M194 5 V13 H203 V5 M196.5 6 V12 M199 6 V12 M201.5 6 V12" fill="none" stroke="#6e6e6e" stroke-width="1"/>
</svg>
<div class="a" style="left:1218px;top:359px;width:242px;height:1px;background:#3c3c3c"></div>
<div class="a" style="left:1218px;top:360px;width:242px;height:8px;background:#4a4a4a"></div>
<svg style="left:1329px;top:361px" width="20" height="6"><g fill="#333"><rect x="0" y="0" width="1" height="5"/><rect x="2" y="0" width="1" height="5"/><rect x="4" y="0" width="1" height="5"/><rect x="6" y="0" width="1" height="5"/><rect x="8" y="0" width="1" height="5"/><rect x="10" y="0" width="1" height="5"/><rect x="12" y="0" width="1" height="5"/><rect x="14" y="0" width="1" height="5"/><rect x="16" y="0" width="1" height="5"/></g></svg>

<!-- red arrow -->
<svg style="left:1260px;top:330px" width="60" height="180">
<path d="M18 166 L44.5 21" stroke="#e8101c" stroke-width="2.3" stroke-linecap="round"/>
<path d="M46 8.5 L50.5 24 L40 22.5Z" fill="#e8101c"/>
</svg>
<!-- ===== status bar ===== -->
<div class="a" style="left:78px;top:938px;width:1380px;height:16px;background:#535353"></div>
<div class="a" style="left:78px;top:938px;width:1380px;height:1px;background:#404040"></div>
<div class="a" style="left:82px;top:939px;width:49px;height:15px;background:#474747"></div>
<div class="t mono" style="left:84px;top:941px;font-size:11px">80%</div>
<svg style="left:135px;top:944px" width="10" height="6"><path d="M1 1 L5 5 L9 1" fill="none" stroke="#e8e8e8" stroke-width="1.5"/></svg>
<svg style="left:155px;top:941px" width="140" height="12"><g fill="#6a6a6a"><rect x="3" y="1" width="2" height="9"/><path d="M12 1 V10 L6 5.5Z M24 1 V10 L19 5.5Z M106 1 V10 L111 5.5Z M118 1 V10 L124 5.5Z"/><rect x="125" y="1" width="2" height="9"/></g></svg>
<div class="a" style="left:192px;top:939px;width:40px;height:15px;background:#474747"></div>
<div class="t mono" style="left:196px;top:941px;font-size:11px">1</div>
<svg style="left:235px;top:944px" width="10" height="6"><path d="M1 1 L5 5 L9 1" fill="none" stroke="#e8e8e8" stroke-width="1.5"/></svg>
<div class="t" style="left:380px;top:941px;font-size:12px;color:#d8d8d8">选择</div>
<div class="a" style="left:508px;top:939px;width:932px;height:15px;background:#4a4a4a"></div>
<svg style="left:496px;top:941px" width="30" height="12"><path d="M1 1 V10 L7 5.5Z" fill="#d8d8d8"/><path d="M24 2 L20.5 5.5 L24 9" fill="none" stroke="#8a8a8a" stroke-width="1.4"/></svg>

<div class="a" style="left:951px;top:939px;width:25px;height:15px;background:#5e5e5e;border-radius:8px"></div>
<svg style="left:1430px;top:941px" width="8" height="11"><path d="M2 1 L6 5.5 L2 10" fill="none" stroke="#8a8a8a" stroke-width="1.4"/></svg>
<div class="a" style="left:1442px;top:938px;width:16px;height:16px;background:#535353"></div>
<div class="a" style="left:0;top:954px;width:1751px;height:5px;background:#2a2a2a"></div>


<!-- ===== right icon strip ===== -->
<div class="a" style="left:1461px;top:68px;width:37px;height:886px;background:#535353"></div>
<div class="a" style="left:1461px;top:68px;width:38px;height:13px;background:#444"></div>
<div class="a" style="left:1498px;top:68px;width:3px;height:886px;background:#3c3c3c"></div>


<!-- icon strip content -->
<svg style="left:1459px;top:68px" width="42" height="400">
<path d="M30 4 L27 6.5 L30 9Z M34 4 L31 6.5 L34 9Z" fill="#cfcfcf"/>
<g fill="#3a3a3a"><rect x="0" y="81" width="42" height="1"/><rect x="0" y="150" width="42" height="2"/><rect x="0" y="218" width="42" height="2"/><rect x="0" y="287" width="42" height="2"/><rect x="0" y="334" width="42" height="2"/><rect x="0" y="369" width="42" height="2"/></g>
<g fill="#3c3c3c">
<path d="M13 15 h1 v5 h-1z M15 15 h1 v5 h-1z M17 15 h1 v5 h-1z M19 15 h1 v5 h-1z M21 15 h1 v5 h-1z M23 15 h1 v5 h-1z M25 15 h1 v5 h-1z M27 15 h1 v5 h-1z"/>
<path d="M13 84 h1 v5 h-1z M15 84 h1 v5 h-1z M17 84 h1 v5 h-1z M19 84 h1 v5 h-1z M21 84 h1 v5 h-1z M23 84 h1 v5 h-1z M25 84 h1 v5 h-1z M27 84 h1 v5 h-1z"/>
<path d="M13 153 h1 v5 h-1z M15 153 h1 v5 h-1z M17 153 h1 v5 h-1z M19 153 h1 v5 h-1z M21 153 h1 v5 h-1z M23 153 h1 v5 h-1z M25 153 h1 v5 h-1z M27 153 h1 v5 h-1z"/>
<path d="M13 222 h1 v5 h-1z M15 222 h1 v5 h-1z M17 222 h1 v5 h-1z M19 222 h1 v5 h-1z M21 222 h1 v5 h-1z M23 222 h1 v5 h-1z M25 222 h1 v5 h-1z M27 222 h1 v5 h-1z"/>
<path d="M13 292 h1 v5 h-1z M15 292 h1 v5 h-1z M17 292 h1 v5 h-1z M19 292 h1 v5 h-1z M21 292 h1 v5 h-1z M23 292 h1 v5 h-1z M25 292 h1 v5 h-1z M27 292 h1 v5 h-1z"/>
<path d="M13 339 h1 v5 h-1z M15 339 h1 v5 h-1z M17 339 h1 v5 h-1z M19 339 h1 v5 h-1z M21 339 h1 v5 h-1z M23 339 h1 v5 h-1z M25 339 h1 v5 h-1z M27 339 h1 v5 h-1z"/>
</g>
<!-- color guide -->
<circle cx="21" cy="37" r="8" fill="none" stroke="#d0d0d0" stroke-width="1.6" stroke-dasharray="2 1.6"/><circle cx="21" cy="37" r="5.8" fill="#d0d0d0"/>
<!-- gradient/transparency -->
<defs><radialGradient id="rq" cx="0" cy="1" r="1"><stop offset="0" stop-color="#666"/><stop offset="1" stop-color="#ddd"/></radialGradient></defs>
<path d="M13.5 72 V57 A15 15 0 0 1 28.5 72Z" fill="url(#rq)" stroke="#e0e0e0" stroke-width="1.3"/>
<!-- align -->
<rect x="13" y="96" width="1.5" height="15" fill="#cfcfcf"/><rect x="15" y="98" width="7" height="4" fill="#cfcfcf"/><rect x="15" y="104" width="12" height="5" fill="#cfcfcf"/>
<!-- pathfinder -->
<rect x="14" y="125" width="8" height="8" fill="#cfcfcf"/><rect x="19" y="130" width="9" height="9" fill="#cfcfcf"/><rect x="19" y="130" width="3" height="3" fill="#777"/>
<!-- brushes highlighted -->
<rect x="7" y="162" width="28" height="22" fill="#333"/>
<path d="M16 174 H26 L25 183 H17Z" fill="#d4d4d4"/>
<path d="M18 174 L15 166 M21 174 L21 164 M24 174 L27 167" stroke="#d4d4d4" stroke-width="1.6"/>
<circle cx="15" cy="166" r="2" fill="#d4d4d4"/><circle cx="27.5" cy="167" r="2.2" fill="#d4d4d4"/>
<!-- symbols club -->
<circle cx="21" cy="197" r="3.6" fill="#cfcfcf"/><circle cx="17" cy="203" r="3.6" fill="#cfcfcf"/><circle cx="25" cy="203" r="3.6" fill="#cfcfcf"/><path d="M21 200 L23.5 210 H18.5Z" fill="#cfcfcf"/>
<!-- char styles -->
<text x="19" y="247" font-family="Liberation Sans" font-size="16" fill="#d8d8d8">A</text>
<rect x="12.5" y="242.5" width="5" height="5" fill="none" stroke="#d8d8d8" stroke-width="1.2"/><rect x="14.5" y="245.5" width="5" height="5" fill="#535353" stroke="#d8d8d8" stroke-width="1.2"/>
<!-- para styles -->
<path d="M24 262 H29 V277 M26.5 262 V277" fill="none" stroke="#d8d8d8" stroke-width="1.4"/><circle cx="24" cy="265.5" r="3.5" fill="#d8d8d8"/>
<rect x="12.5" y="270.5" width="5" height="5" fill="none" stroke="#d8d8d8" stroke-width="1.2"/><rect x="14.5" y="273.5" width="5" height="5" fill="#535353" stroke="#d8d8d8" stroke-width="1.2"/>
<!-- glyph -->
<text x="13" y="319" font-family="Liberation Serif" font-style="italic" font-size="19" fill="#d8d8d8">A</text>
<!-- export -->
<path d="M20 346.5 H13.5 V362.5 H29.5 V356" fill="none" stroke="#d8d8d8" stroke-width="1.8"/>
<path d="M19 357 L28 348 M23 347.5 H28.5 V353" fill="none" stroke="#d8d8d8" stroke-width="1.8"/>
</svg>

<!-- ===== right panels ===== -->
<div class="a" style="left:1501px;top:68px;width:249px;height:886px;background:#535353"></div>
<div class="a" style="left:1501px;top:68px;width:246px;height:13px;background:#444"></div>

<!-- right panels content -->
<svg style="left:1501px;top:68px" width="245" height="20"><path d="M232 4 L235 6.5 L232 9Z M236 4 L239 6.5 L236 9Z" fill="#cfcfcf"/></svg>
<!-- layers panel -->
<div class="a" style="left:1501px;top:81px;width:245px;height:26px;background:#474747"></div>
<div class="a" style="left:1504px;top:82px;width:39px;height:25px;background:#4c4c4c"></div>
<div class="a" style="left:1544px;top:82px;width:41px;height:25px;background:#4c4c4c"></div>
<div class="a" style="left:1586px;top:81px;width:43px;height:27px;background:#535353"></div>
<div class="t" style="left:1511px;top:88px;font-size:12px;color:#b0b0b0">画板</div>
<div class="t" style="left:1552px;top:88px;font-size:12px;color:#b0b0b0">链接</div>
<div class="t" style="left:1595px;top:88px;font-size:12px;color:#f0f0f0">图层</div>
<svg style="left:1729px;top:90px" width="11" height="8"><path d="M0 0.5 H11 M0 2.5 H11 M0 4.5 H11 M0 6.5 H11" stroke="#d8d8d8" stroke-width="1"/></svg>
<div class="a" style="left:1506px;top:113px;width:236px;height:167px;border:1px solid #4c4c4c"></div>
<div class="a" style="left:1507px;top:114px;width:234px;height:22px;background:#4e627f"></div>
<svg style="left:1509px;top:119px" width="16" height="11"><path d="M1 5.5 C4 1 12 1 15 5.5 C12 10 4 10 1 5.5Z" fill="#dfe6f0"/><circle cx="8" cy="5.5" r="2.3" fill="#4e627f"/><circle cx="8" cy="5.5" r="1.2" fill="#dfe6f0"/></svg>
<div class="a" style="left:1550px;top:116px;width:3px;height:18px;background:#5a7ee8"></div>
<svg style="left:1560px;top:120px" width="8" height="10"><path d="M2 1 L6 5 L2 9" fill="none" stroke="#e8e8e8" stroke-width="1.5"/></svg>
<div class="a" style="left:1579px;top:116px;width:18px;height:18px;background:#fff;border:1px solid #111"></div>
<div class="a" style="left:1580px;top:117px;width:16px;height:16px;background:#000;border-radius:50%"></div>
<div class="t" style="left:1602px;top:119px;font-size:12px;color:#e6e6e6;word-spacing:3px">图层 1</div>
<svg style="left:1709px;top:117px" width="34" height="15"><circle cx="6" cy="8" r="4" fill="none" stroke="#e0e0e0" stroke-width="1.2"/><rect x="16.5" y="4.5" width="7" height="7" fill="#5f86ff" stroke="#111" stroke-width="1"/><path d="M25 0 H31 V6Z" fill="#e0e0e0"/></svg>
<div class="t" style="left:1506px;top:283px;font-size:12px;color:#cfcfcf;word-spacing:3px">1 个图层</div>
<svg style="left:1600px;top:281px" width="120" height="15">
<circle cx="9.5" cy="6" r="4.2" fill="none" stroke="#d8d8d8" stroke-width="1.4"/><path d="M6.5 9 L2.5 13" stroke="#d8d8d8" stroke-width="2"/>
<rect x="29.5" y="2.5" width="8" height="8" fill="none" stroke="#d8d8d8" stroke-width="1.2"/><rect x="32" y="5" width="8" height="8" fill="#535353" stroke="#d8d8d8" stroke-width="1.2"/><rect x="32.5" y="5.5" width="5" height="5" fill="#d8d8d8"/>
<path d="M54 4 V8 H60 M57 5.5 L60 8 L57 10.5" fill="none" stroke="#d8d8d8" stroke-width="1.3"/><path d="M62 3 H71 V13 H64 V9 H62Z" fill="#d8d8d8"/>
<path d="M80 3 H90 V13 H84 V9 H80Z" fill="#d8d8d8"/><path d="M80 10 L83 13 H80Z" fill="#d8d8d8"/>
<path d="M105 3 H116 M106 4 V13 H115 V4 M108.5 5 V12 M111 5 V12 M113.5 5 V12" fill="none" stroke="#6e6e6e" stroke-width="1"/>
</svg>
<div class="a" style="left:1501px;top:299px;width:245px;height:2px;background:#3c3c3c"></div>

<!-- stroke panel -->
<div class="a" style="left:1501px;top:301px;width:245px;height:28px;background:#474747"></div>
<div class="a" style="left:1501px;top:302px;width:47px;height:27px;background:#535353"></div>
<div class="a" style="left:1549px;top:303px;width:41px;height:25px;background:#4a4a4a"></div>
<div class="a" style="left:1591px;top:303px;width:65px;height:25px;background:#4a4a4a"></div>
<svg style="left:1506px;top:310px" width="7" height="11"><path d="M1 4 L3.5 1.5 L6 4 M1 7 L3.5 9.5 L6 7" fill="none" stroke="#d0d0d0" stroke-width="1.1"/></svg>
<div class="t" style="left:1517px;top:309px;font-size:12px;color:#f0f0f0">描边</div>
<div class="t" style="left:1558px;top:309px;font-size:12px;color:#b0b0b0">色板</div>
<div class="t" style="left:1600px;top:309px;font-size:12px;color:#b0b0b0">图形样式</div>
<svg style="left:1729px;top:312px" width="11" height="8"><path d="M0 0.5 H11 M0 2.5 H11 M0 4.5 H11 M0 6.5 H11" stroke="#d8d8d8" stroke-width="1"/></svg>
<div class="t" style="left:1530px;top:340px;font-size:12px;color:#e0e0e0">粗细：</div>
<div class="a" style="left:1567px;top:336px;width:16px;height:19px;background:#4b4b4b;border-radius:2px"></div>
<svg style="left:1570px;top:338px" width="10" height="16"><path d="M1.5 5 L5 1.5 L8.5 5 M1.5 11 L5 14.5 L8.5 11" fill="none" stroke="#e0e0e0" stroke-width="1.2"/></svg>
<div class="a" style="left:1585px;top:336px;width:50px;height:19px;background:#454545"></div>
<div class="a" style="left:1636px;top:336px;width:16px;height:19px;background:#4b4b4b;border-radius:2px"></div>
<svg style="left:1639px;top:343px" width="10" height="6"><path d="M1 1 L5 5 L9 1" fill="none" stroke="#e8e8e8" stroke-width="1.5"/></svg>
<div class="t dim" style="left:1530px;top:366px">端点：</div>
<div class="t dim" style="left:1530px;top:393px">边角：</div>
<div class="t dim" style="left:1507px;top:419px">对齐描边：</div>
<div class="t dim" style="left:1657px;top:393px">限制：</div>
<div class="a" style="left:1694px;top:388px;width:38px;height:19px;background:#575757;border-radius:2px"></div>
<div class="t dim" style="left:1736px;top:395px;font-size:8px">x</div>
<svg style="left:1566px;top:361px" width="75" height="80" stroke="#616161" fill="none">
<rect x="0.5" y="0.5" width="66" height="20"/><rect x="0.5" y="27.5" width="66" height="20"/><rect x="0.5" y="53.5" width="66" height="20"/>
<path d="M22.5 0 V21 M44.5 0 V21 M22.5 27 V48 M44.5 27 V48 M22.5 53 V74 M44.5 53 V74"/>
<g fill="#707070" stroke="none">
<rect x="6" y="5" width="10" height="11"/><rect x="28" y="5" width="10" height="11" rx="4"/><rect x="50" y="5" width="10" height="11"/>
<path d="M6 32 H16 V36 H10 V43 H6Z M28 32 H38 V36 H32 V43 H28Z M50 36 L54 32 H60 V36 H54 V43 H50Z"/>
<path d="M7 58 V69 H16 V65 H10 V58Z M29 58 V69 H38 V65 H32 V58Z M51 58 V69 H60 V65 H54 V58Z"/>
</g></svg>
<div class="a" style="left:1507px;top:442px;width:234px;height:1px;background:#4a4a4a"></div>
<div class="a" style="left:1507px;top:454px;width:12px;height:12px;background:#dcdcdc;border-radius:1px"></div>
<div class="a" style="left:1510px;top:459px;width:6px;height:2px;background:#333"></div>
<div class="t" style="left:1524px;top:454px;font-size:12px;color:#ececec">虚线</div>
<svg style="left:1664px;top:449px" width="80" height="22" fill="none"><rect x="0.5" y="0.5" width="39" height="21" stroke="#5e5e5e"/><rect x="39.5" y="0.5" width="39" height="21" stroke="#5e5e5e"/><path d="M7 6 H10 M14 6 H22 M27 6 H31 V16 H27 M22 16 H14 M10 16 H7 V6" stroke="#777" stroke-width="1.3" stroke-dasharray="0"/><path d="M47 6 H50 M55 6 H61 M65 6 H71 M47 16 H50 M55 16 H61 M65 16 H71 M47 6 V16 M71 6 V16" stroke="#777" stroke-width="1.3"/></svg>
<div class="a" style="left:1507px;top:476px;width:34px;height:20px;background:#585858"></div>
<div class="a" style="left:1546px;top:476px;width:34px;height:20px;background:#585858"></div>
<div class="a" style="left:1585px;top:476px;width:34px;height:20px;background:#585858"></div>
<div class="a" style="left:1624px;top:476px;width:34px;height:20px;background:#585858"></div>
<div class="a" style="left:1664px;top:476px;width:34px;height:20px;background:#585858"></div>
<div class="a" style="left:1703px;top:476px;width:34px;height:20px;background:#585858"></div>
<div class="t dim" style="left:1512px;top:499px">虚线</div>
<div class="t dim" style="left:1551px;top:499px">间隙</div>
<div class="t dim" style="left:1590px;top:499px">虚线</div>
<div class="t dim" style="left:1629px;top:499px">间隙</div>
<div class="t dim" style="left:1669px;top:499px">虚线</div>
<div class="t dim" style="left:1708px;top:499px">间隙</div>
<div class="a" style="left:1507px;top:516px;width:234px;height:1px;background:#4a4a4a"></div>
<div class="t dim" style="left:1530px;top:529px">箭头：</div>
<div class="a" style="left:1566px;top:524px;width:38px;height:21px;background:#7a7a7a"></div>
<div class="a" style="left:1604px;top:524px;width:18px;height:21px;background:#565656"></div>
<div class="a" style="left:1629px;top:524px;width:38px;height:21px;background:#7a7a7a"></div>
<div class="a" style="left:1667px;top:524px;width:18px;height:21px;background:#565656"></div>
<svg style="left:1608px;top:531px" width="80" height="8"><path d="M1 1 L5 5 L9 1 M64 1 L68 5 L72 1" fill="none" stroke="#6e6e6e" stroke-width="1.3"/></svg>
<svg style="left:1721px;top:526px" width="16" height="16"><path d="M1 5 H13 M10 2 L13 5 L10 8 M15 11 H3 M6 8 L3 11 L6 14" fill="none" stroke="#777" stroke-width="1.5"/></svg>
<div class="t dim" style="left:1530px;top:558px">缩放：</div>
<div class="a" style="left:1566px;top:554px;width:57px;height:20px;background:#565656"></div>
<div class="a" style="left:1629px;top:554px;width:57px;height:20px;background:#565656"></div>
<svg style="left:1568px;top:556px" width="120" height="17"><path d="M3 5 L6.5 1.5 L10 5 M3 11 L6.5 14.5 L10 11 M66 5 L69.5 1.5 L73 5 M66 11 L69.5 14.5 L73 11" fill="none" stroke="#6e6e6e" stroke-width="1.2"/></svg>
<div class="t dim" style="left:1586px;top:558px;font-size:11px">100%</div>
<div class="t dim" style="left:1649px;top:558px;font-size:11px">100%</div>
<svg style="left:1721px;top:555px" width="16" height="18"><rect x="4" y="1" width="6" height="8" rx="3" fill="none" stroke="#777" stroke-width="1.5"/><rect x="6" y="9" width="6" height="8" rx="3" fill="none" stroke="#777" stroke-width="1.5"/><path d="M1 3 L15 17" stroke="#777" stroke-width="1.3"/></svg>
<div class="t dim" style="left:1530px;top:588px">对齐：</div>
<svg style="left:1566px;top:583px" width="48" height="22"><rect x="0.5" y="0.5" width="46" height="20" fill="none" stroke="#616161"/><path d="M23.5 0 V21" stroke="#616161"/><path d="M5 8 H16 M5 13 H17 M13 10 L17 13 L13 16 M28 8 H40 M28 13 H40 M37 10 L40 13 L37 16" fill="none" stroke="#777" stroke-width="1.4"/></svg>
<div class="a" style="left:1507px;top:611px;width:234px;height:1px;background:#4a4a4a"></div>
<div class="t dim" style="left:1507px;top:622px">配置文件：</div>
<div class="a" style="left:1566px;top:617px;width:88px;height:22px;background:#7c7c7c"></div>
<div class="a" style="left:1654px;top:617px;width:18px;height:22px;background:#565656"></div>
<svg style="left:1658px;top:625px" width="10" height="6"><path d="M1 1 L5 5 L9 1" fill="none" stroke="#6e6e6e" stroke-width="1.3"/></svg>
<svg style="left:1697px;top:621px" width="42" height="15"><path d="M1 3 L6 7.5 L1 12Z M14 3 L9 7.5 L14 12Z M7.5 1 V14" fill="none" stroke="#777" stroke-width="1.2"/><path d="M26 2 H36 L31 7Z M26 13 H36 L31 8Z M25 7.5 H37" fill="none" stroke="#777" stroke-width="1.2"/></svg>
<div class="a" style="left:1501px;top:645px;width:245px;height:2px;background:#3c3c3c"></div>

<!-- gradient panel -->
<div class="a" style="left:1501px;top:647px;width:245px;height:29px;background:#474747"></div>
<div class="a" style="left:1503px;top:648px;width:38px;height:27px;background:#4a4a4a"></div>
<div class="a" style="left:1542px;top:648px;width:53px;height:27px;background:#4a4a4a"></div>
<div class="a" style="left:1597px;top:647px;width:47px;height:29px;background:#535353"></div>
<div class="t" style="left:1510px;top:656px;font-size:12px;color:#b0b0b0">颜色</div>
<div class="t" style="left:1552px;top:656px;font-size:12px;color:#b0b0b0">透明度</div>
<svg style="left:1601px;top:657px" width="7" height="11"><path d="M1 4 L3.5 1.5 L6 4 M1 7 L3.5 9.5 L6 7" fill="none" stroke="#d0d0d0" stroke-width="1.1"/></svg>
<div class="t" style="left:1612px;top:656px;font-size:12px;color:#f0f0f0">渐变</div>
<svg style="left:1729px;top:659px" width="11" height="8"><path d="M0 0.5 H11 M0 2.5 H11 M0 4.5 H11 M0 6.5 H11" stroke="#d8d8d8" stroke-width="1"/></svg>
<div class="a" style="left:1507px;top:682px;width:30px;height:31px;background:linear-gradient(90deg,#f4f4f4,#b8b4b4 50%,#3a3030);border:1px solid #3a3a3a"></div>
<svg style="left:1540px;top:695px" width="7" height="5"><path d="M0 0 H7 L3.5 4Z" fill="#d0d0d0"/></svg>
<div class="t" style="left:1555px;top:687px;font-size:12px;color:#dcdcdc">类型：</div>
<div class="a" style="left:1593px;top:684px;width:146px;height:18px;background:#494949;border:1px solid #4f4f4f"></div>
<svg style="left:1727px;top:690px" width="10" height="6"><path d="M1 1 L5 5 L9 1" fill="none" stroke="#e8e8e8" stroke-width="1.5"/></svg>
<div class="a" style="left:1518px;top:729px;width:18px;height:19px;background:#fff;border:1px solid #333"></div>
<div class="a" style="left:1522px;top:733px;width:10px;height:11px;background:#4a4a4a;border:1px solid #222"></div>
<svg style="left:1518px;top:729px" width="18" height="19"><path d="M1 18 L17 2" stroke="#d71a21" stroke-width="2"/></svg>
<div class="a" style="left:1508px;top:720px;width:18px;height:18px;background:#000;border:1px solid #f0f0f0"></div>
<svg style="left:1513px;top:760px" width="18" height="16"><rect x="0.5" y="0.5" width="7" height="5" fill="none" stroke="#6e6e6e"/><rect x="7.5" y="9.5" width="7" height="5" fill="none" stroke="#6e6e6e"/><path d="M10 2 H15 L12.5 5Z M0 12 L4 10 V14Z" fill="#6e6e6e"/></svg>
<div class="t dim" style="left:1555px;top:713px">描边：</div>
<svg style="left:1593px;top:708px" width="68" height="22"><rect x="0.5" y="0.5" width="66" height="21" fill="#4f4f4f" stroke="#5a5a5a"/><path d="M22.5 0 V22 M44.5 0 V22" stroke="#5a5a5a"/><path d="M5 18 V5 H18 M8 18 V8 H18 M27 5 H40 V18 M30 5 V11 H37 M49 18 V5 H62 M52 18 V8 H62 M55 18 V11 H62" fill="none" stroke="#6a6a6a" stroke-width="1.4"/></svg>
<svg style="left:1571px;top:738px" width="18" height="14"><path d="M1 13 H16 M1 13 L12 2" fill="none" stroke="#7a7a7a" stroke-width="1.3"/><path d="M7 13 A6 6 0 0 0 5 9" fill="none" stroke="#7a7a7a" stroke-width="1.1"/></svg>
<div class="a" style="left:1593px;top:735px;width:68px;height:21px;background:#565656"></div>
<svg style="left:1646px;top:743px" width="10" height="6"><path d="M1 1 L5 5 L9 1" fill="none" stroke="#6e6e6e" stroke-width="1.3"/></svg>
<svg style="left:1571px;top:763px" width="18" height="15"><path d="M2 1 V14 M0 3 L2 1 L4 3 M0 12 L2 14 L4 12" fill="none" stroke="#7a7a7a" stroke-width="1.1"/><ellipse cx="11" cy="7" rx="6" ry="4" fill="none" stroke="#7a7a7a" stroke-width="1.2"/><path d="M5 13 H17" stroke="#7a7a7a"/></svg>
<div class="a" style="left:1593px;top:761px;width:68px;height:21px;background:#565656"></div>
<svg style="left:1646px;top:769px" width="10" height="6"><path d="M1 1 L5 5 L9 1" fill="none" stroke="#6e6e6e" stroke-width="1.3"/></svg>
<div class="a" style="left:1512px;top:796px;width:199px;height:18px;background:linear-gradient(90deg,#f6f6f6,#a9a3a3 55%,#2e2624);border:1px solid #3c3c3c"></div>
<svg style="left:1722px;top:799px" width="14" height="15"><path d="M0 2 H14 M1.5 3 V14 H12.5 V3 M4.5 4 V13 M7 4 V13 M9.5 4 V13" fill="none" stroke="#6e6e6e" stroke-width="1"/></svg>
<div class="t dim" style="left:1533px;top:846px">不透明度：</div>
<div class="a" style="left:1592px;top:840px;width:69px;height:20px;background:#565656"></div>
<svg style="left:1646px;top:848px" width="10" height="6"><path d="M1 1 L5 5 L9 1" fill="none" stroke="#6e6e6e" stroke-width="1.3"/></svg>
<div class="t dim" style="left:1556px;top:873px">位置：</div>
<div class="a" style="left:1592px;top:866px;width:69px;height:20px;background:#565656"></div>
<div class="a" style="left:1501px;top:892px;width:245px;height:2px;background:#3c3c3c"></div>

<!-- transform panel -->
<div class="a" style="left:1501px;top:894px;width:245px;height:28px;background:#474747"></div>
<div class="a" style="left:1501px;top:894px;width:48px;height:28px;background:#535353"></div>
<svg style="left:1506px;top:903px" width="7" height="11"><path d="M1 4 L3.5 1.5 L6 4 M1 7 L3.5 9.5 L6 7" fill="none" stroke="#d0d0d0" stroke-width="1.1"/></svg>
<div class="t" style="left:1517px;top:902px;font-size:12px;color:#f0f0f0">变换</div>
<svg style="left:1729px;top:905px" width="11" height="8"><path d="M0 0.5 H11 M0 2.5 H11 M0 4.5 H11 M0 6.5 H11" stroke="#d8d8d8" stroke-width="1"/></svg>
<div class="a" style="left:1501px;top:922px;width:245px;height:4px;background:#3c3c3c"></div>
<!-- character panel -->
<div class="a" style="left:1501px;top:926px;width:245px;height:28px;background:#474747"></div>
<div class="a" style="left:1501px;top:926px;width:48px;height:28px;background:#535353"></div>
<div class="a" style="left:1550px;top:927px;width:41px;height:27px;background:#4a4a4a"></div>
<div class="a" style="left:1592px;top:927px;width:78px;height:27px;background:#4a4a4a"></div>
<svg style="left:1506px;top:935px" width="7" height="11"><path d="M1 4 L3.5 1.5 L6 4 M1 7 L3.5 9.5 L6 7" fill="none" stroke="#d0d0d0" stroke-width="1.1"/></svg>
<div class="t" style="left:1517px;top:934px;font-size:12px;color:#f0f0f0">字符</div>
<div class="t" style="left:1559px;top:934px;font-size:12px;color:#b0b0b0">段落</div>
<div class="t" style="left:1602px;top:934px;font-size:12px;color:#b0b0b0">OpenType</div>
<svg style="left:1729px;top:936px" width="11" height="8"><path d="M0 0.5 H11 M0 2.5 H11 M0 4.5 H11 M0 6.5 H11" stroke="#d8d8d8" stroke-width="1"/></svg>

<!-- watermark -->
<svg style="left:1486px;top:848px" width="80" height="64">
<path d="M27 3 C14 3 4 11.5 4 22 C4 28 7 33 12 36.5 L9 45 L19 40 C21.5 40.7 24 41 27 41 C40 41 50 32.5 50 22 C50 11.5 40 3 27 3Z" fill="#ebebeb" stroke="#333" stroke-width="0.8"/>
<circle cx="19" cy="17" r="3.2" fill="#3a3a3a"/><circle cx="34.5" cy="17" r="3.2" fill="#3a3a3a"/>
<path d="M49 21 C37.5 21 28.5 28.5 28.5 38 C28.5 47.5 37.5 55 49 55 C51.5 55 54 54.6 56 54 L65 58.5 L62.5 51 C67 47.5 70 43 70 38 C70 28.5 60.5 21 49 21Z" fill="#ebebeb" stroke="#3a3a3a" stroke-width="1.6"/>
<circle cx="43" cy="33" r="2.8" fill="#3a3a3a"/><circle cx="56" cy="33" r="2.8" fill="#3a3a3a"/>
</svg>
<div class="t" style="left:1566px;top:860px;font-size:42px;color:#fafafa;text-shadow:0 0 1.5px rgba(0,0,0,0.6);letter-spacing:0px;-webkit-text-stroke:0.9px #fafafa">野鹿志</div>

<div class="a" style="left:1750px;top:0px;width:1px;height:959px;background:#2a2a2a"></div>
<div class="a" style="left:1px;top:955px;width:1749px;height:3px;background:#4c4c4c"></div>

</body></html>
